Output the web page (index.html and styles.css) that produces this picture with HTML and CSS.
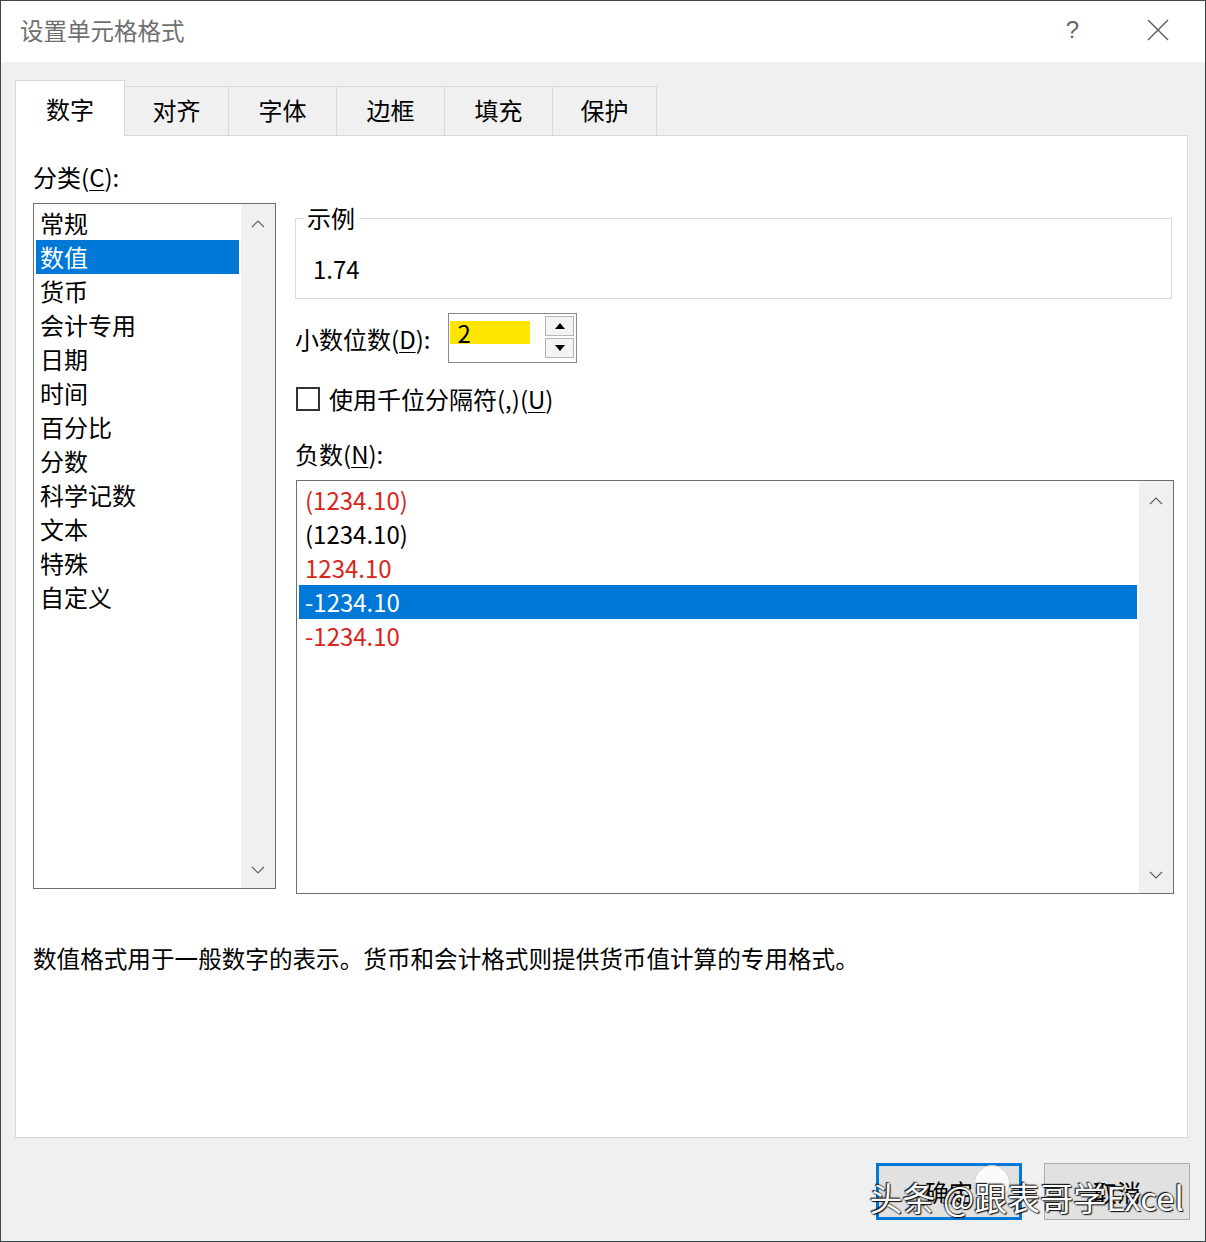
FILE: index.html
```html
<!DOCTYPE html>
<html lang="zh-CN">

<head>
    <meta charset="UTF-8">
    <title>设置单元格格式</title>
    <link rel="stylesheet" href="styles.css">
</head>

<body>

    <div class="window">
        <div class="titlebar">
            <span class="title">设置单元格格式</span>
            <span class="help">?</span>
            <svg class="close" width="22" height="22" viewBox="0 0 22 22">
                <path d="M1 1 L21 21 M21 1 L1 21" stroke="#5a5a5a" stroke-width="1.4" fill="none" />
            </svg>
        </div>

        <div class="body">
            <div class="tabs">
                <div class="tab active" style="width:110px">数字</div>
                <div class="tab" style="width:104px">对齐</div>
                <div class="tab" style="width:108px">字体</div>
                <div class="tab" style="width:108px">边框</div>
                <div class="tab" style="width:108px">填充</div>
                <div class="tab" style="width:104px">保护</div>
            </div>

            <div class="panel">
                <div class="columns">
                    <div class="left">
                        <div class="label">分类(<u>C</u>):</div>
                        <div class="listbox category">
                            <ul class="items">
                                <li>常规</li>
                                <li class="selected">数值</li>
                                <li>货币</li>
                                <li>会计专用</li>
                                <li>日期</li>
                                <li>时间</li>
                                <li>百分比</li>
                                <li>分数</li>
                                <li>科学记数</li>
                                <li>文本</li>
                                <li>特殊</li>
                                <li>自定义</li>
                            </ul>
                            <div class="scrollbar">
                                <svg width="14" height="8" viewBox="0 0 14 8"><polyline points="1,7 7,1 13,7" fill="none" stroke="#606060" stroke-width="1.2" /></svg>
                                <svg width="14" height="8" viewBox="0 0 14 8"><polyline points="1,1 7,7 13,1" fill="none" stroke="#606060" stroke-width="1.2" /></svg>
                            </div>
                        </div>
                    </div>

                    <div class="right">
                        <fieldset class="sample">
                            <legend>示例</legend>
                            <div class="value">1.74</div>
                        </fieldset>

                        <div class="decimals">
                            <span>小数位数(<u>D</u>):</span>
                            <div class="spin">
                                <span class="spin-text">2</span>
                                <div class="spin-btns">
                                    <div class="spin-btn"><svg width="10" height="6" viewBox="0 0 10 6"><polygon points="0,6 5,0 10,6" fill="#000" /></svg></div>
                                    <div class="spin-btn"><svg width="10" height="6" viewBox="0 0 10 6"><polygon points="0,0 10,0 5,6" fill="#000" /></svg></div>
                                </div>
                            </div>
                        </div>

                        <div class="check-row">
                            <span class="checkbox"></span>
                            <span>使用千位分隔符(,)(<u>U</u>)</span>
                        </div>

                        <div class="label neg-label">负数(<u>N</u>):</div>
                        <div class="listbox negative">
                            <ul class="items">
                                <li class="red">(1234.10)</li>
                                <li>(1234.10)</li>
                                <li class="red">1234.10</li>
                                <li class="selected">-1234.10</li>
                                <li class="red">-1234.10</li>
                            </ul>
                            <div class="scrollbar">
                                <svg width="14" height="8" viewBox="0 0 14 8"><polyline points="1,7 7,1 13,7" fill="none" stroke="#606060" stroke-width="1.2" /></svg>
                                <svg width="14" height="8" viewBox="0 0 14 8"><polyline points="1,1 7,7 13,1" fill="none" stroke="#606060" stroke-width="1.2" /></svg>
                            </div>
                        </div>
                    </div>
                </div>

                <p class="desc">数值格式用于一般数字的表示。货币和会计格式则提供货币值计算的专用格式。</p>
            </div>

            <div class="buttons">
                <div class="btn default">确定</div>
                <div class="btn">取消</div>
                <span class="sticker"></span>
                <div class="watermark">头条 @跟表哥学Excel</div>
            </div>
        </div>
    </div>

</body>

</html>
```

FILE: styles.css
```css
html,
body {
    margin: 0;
    padding: 0;
}

body {
    width: 1206px;
    height: 1242px;
    overflow: hidden;
    font-family: "Noto Sans CJK SC", "Noto Sans", sans-serif;
    font-size: 24px;
    color: #000;
    background: #f0f0f0;
}

ul {
    margin: 0;
    padding: 0;
    list-style: none;
}

u {
    text-decoration-thickness: 1px;
    text-underline-offset: 3px;
}

.window {
    box-sizing: border-box;
    width: 1206px;
    height: 1242px;
    border: 1px solid #3c4848;
    background: #f0f0f0;
    display: flex;
    flex-direction: column;
}

.titlebar {
    box-sizing: border-box;
    height: 61px;
    background: #fff;
    display: flex;
    align-items: center;
    padding: 0 36px 4px 19px;
}

.title {
    flex: 1;
    color: #6f6f6f;
    font-size: 23.5px;
    line-height: 30px;
}

.help {
    color: #666;
    font-size: 24px;
    margin-right: 68px;
    font-family: "Liberation Sans", sans-serif;
}

.body {
    padding: 18px 17px 0 14px;
}

.tabs {
    display: flex;
    align-items: flex-end;
    height: 55px;
}

.tab {
    box-sizing: border-box;
    height: 49px;
    border: 1px solid #d9d9d9;
    border-left: none;
    border-bottom: none;
    background: #f0f0f0;
    display: flex;
    align-items: center;
    justify-content: center;
    padding-bottom: 3px;
}

.tab.active {
    height: 56px;
    margin-bottom: -1px;
    border-left: 1px solid #d9d9d9;
    background: #fff;
    position: relative;
    padding: 2px 0;
}

.panel {
    box-sizing: border-box;
    width: 1173px;
    height: 1003px;
    background: #fff;
    border: 1px solid #d9d9d9;
    padding: 26px 13px 0 17px;
}

.columns {
    display: flex;
    gap: 19px;
}

.label {
    line-height: 30px;
}

.left {
    width: 243px;
}

.left .label {
    margin-bottom: 11px;
}

.listbox {
    box-sizing: border-box;
    border: 1px solid #6e6e6e;
    background: #fff;
    display: flex;
}

.listbox .items {
    flex: 1;
    padding: 2px 2px 0 2px;
}

.listbox li {
    height: 34px;
    line-height: 34px;
    padding-left: 4px;
    white-space: nowrap;
}

.listbox li.selected {
    background: #0078d7;
    color: #fff;
}

.listbox li.red {
    color: #d9261c;
}

.scrollbar {
    width: 34px;
    background: #f0f0f0;
    display: flex;
    flex-direction: column;
    justify-content: space-between;
    align-items: center;
    padding: 16px 0 14px;
}

.category {
    height: 686px;
}

.right {
    flex: 1;
    padding-top: 41px;
}

.sample {
    margin: 0;
    width: 877px;
    box-sizing: border-box;
    border: 1px solid #dcdcdc;
    padding: 21px 17px 14px;
}

.sample legend {
    margin-left: -9px;
    padding: 0 3px;
    line-height: 30px;
}

.sample .value {
    line-height: 30px;
}

.decimals {
    margin-top: 14px;
    display: flex;
    align-items: center;
    gap: 18px;
}

.spin {
    box-sizing: border-box;
    width: 129px;
    height: 50px;
    border: 1px solid #8a8a8a;
    display: flex;
    padding: 2px 2px 4px 1px;
}

.spin-text {
    width: 73px;
    height: 23px;
    margin-top: 5px;
    background: #ffe600;
    line-height: 23px;
    padding-left: 7px;
}

.spin-btns {
    margin-left: auto;
    display: flex;
    flex-direction: column;
    gap: 2px;
}

.spin-btn {
    box-sizing: border-box;
    width: 29px;
    height: 20px;
    border: 1px solid #b5b5b5;
    background: #f4f4f4;
    display: flex;
    align-items: center;
    justify-content: center;
}

.check-row {
    margin-top: 23px;
    display: flex;
    align-items: center;
    gap: 9px;
    line-height: 26px;
}

.checkbox {
    box-sizing: border-box;
    width: 24px;
    height: 24px;
    border: 2px solid #333;
    margin-left: 1px;
}

.neg-label {
    margin-top: 27px;
    margin-bottom: 11px;
}

.negative {
    margin-left: 1px;
    width: 878px;
    height: 414px;
}

.negative .items {
    padding-top: 2px;
}

.negative li {
    padding-left: 6px;
}

.desc {
    margin: 49px 0 0 0;
    font-size: 23.6px;
    line-height: 30px;
}

.buttons {
    margin-top: 25px;
    display: flex;
    justify-content: flex-end;
    gap: 22px;
    position: relative;
    margin-right: -2px;
}

.btn {
    box-sizing: border-box;
    width: 146px;
    height: 57px;
    background: #e1e1e1;
    border: 1px solid #adadad;
    display: flex;
    align-items: center;
    justify-content: center;
}

.btn.default {
    border: 3px solid #0078d7;
}

.sticker {
    position: absolute;
    right: 180px;
    top: 2px;
    width: 34px;
    height: 34px;
    border-radius: 50%;
    background: #fafafa;
    border: 1px solid #d0d0d0;
}

.watermark {
    position: absolute;
    right: 6px;
    top: 14px;
    font-size: 33px;
    line-height: 40px;
    color: #fff;
    white-space: nowrap;
    text-shadow: 0 0 2px #000, 1px 1px 1px #000, -1px -1px 1px #000;
    opacity: 0.92;
}
```
